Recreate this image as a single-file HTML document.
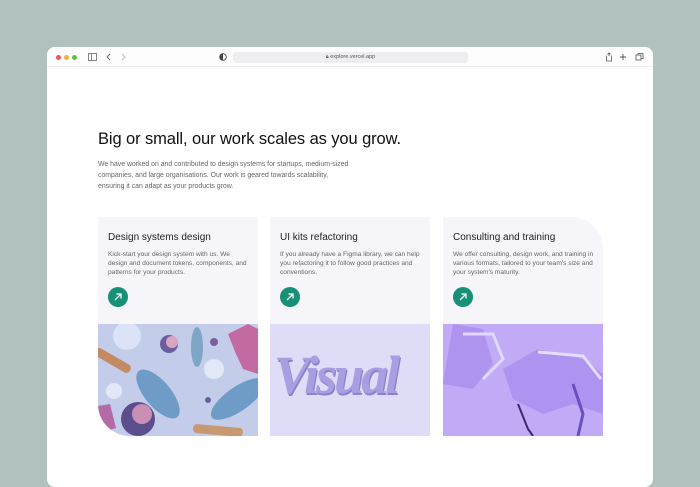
<!DOCTYPE html>
<html><head><meta charset="utf-8"><style>
*{margin:0;padding:0;box-sizing:border-box}
body{width:700px;height:476px;background:#b1c1be;font-family:"Liberation Sans",sans-serif;position:relative;overflow:hidden}
.win{position:absolute;left:47px;top:47px;width:606px;height:440px;background:#fff;border-radius:8px;overflow:hidden}
.bar{height:20px;background:#fdfdfe;border-bottom:1px solid #eeeef0;position:relative}
.dot{position:absolute;top:8px;width:5px;height:5px;border-radius:50%}
.url{position:absolute;left:186px;top:5px;width:235px;height:11px;background:#eeeef0;border-radius:3px;font-size:5.5px;color:#555;text-align:center;line-height:11px}
h1{position:absolute;left:51px;top:83px;font-size:16.5px;font-weight:400;color:#111;letter-spacing:-0.1px}
.intro{position:absolute;left:51px;top:112px;white-space:nowrap;font-size:6.9px;line-height:11px;color:#666}
.card{position:absolute;top:170px;width:160px;height:219px;background:#f6f5fa;overflow:hidden}
.card h2{position:absolute;left:10px;top:15px;font-size:10px;font-weight:400;color:#222}
.card p{position:absolute;left:10px;top:33px;white-space:nowrap;font-size:6.6px;line-height:9.2px;color:#666}
.btn{position:absolute;left:10px;top:70px;width:20px;height:20px;border-radius:50%;background:#179077}
.img{position:absolute;left:0;top:107px;width:100%;height:112px}
</style></head><body>
<div class="win">
 <div class="bar">
  <div class="dot" style="left:9px;background:#ec5a54"></div>
  <div class="dot" style="left:17px;background:#f1b13a"></div>
  <div class="dot" style="left:25px;background:#5dc244"></div>
  <svg style="position:absolute;left:41px;top:6px" width="10" height="8"><rect x="0.5" y="0.5" width="8" height="7" fill="none" stroke="#666" stroke-width="0.8"/><line x1="3.5" y1="0.5" x2="3.5" y2="7.5" stroke="#666" stroke-width="0.8"/></svg>
  <svg style="position:absolute;left:59px;top:6px" width="20" height="8"><path d="M4 1L1 4L4 7" fill="none" stroke="#666" stroke-width="0.9"/><path d="M16 1L19 4L16 7" fill="none" stroke="#bbb" stroke-width="0.9"/></svg>
  <svg style="position:absolute;left:172px;top:6px" width="8" height="8"><circle cx="4" cy="4" r="3.3" fill="none" stroke="#444" stroke-width="0.9"/><path d="M4 0.7A3.3 3.3 0 0 0 4 7.3Z" fill="#444"/></svg>
  <div class="url">🔒︎ explore.vercel.app</div>
  <svg style="position:absolute;left:558px;top:5px" width="44" height="10"><path d="M4 4V1M2.5 2.5L4 1L5.5 2.5M2 4H1.5V9H6.5V4H6" fill="none" stroke="#555" stroke-width="0.8"/><path d="M18 2V8M15 5H21" stroke="#555" stroke-width="0.9"/><rect x="31" y="3" width="5" height="5" fill="none" stroke="#555" stroke-width="0.8"/><path d="M33 3V1.5H38V6.5H36" fill="none" stroke="#555" stroke-width="0.8"/></svg>
 </div>
 <h1>Big or small, our work scales as you grow.</h1>
 <div class="intro">We have worked on and contributed to design systems for startups, medium-sized<br>companies, and large organisations. Our work is geared towards scalability,<br>ensuring it can adapt as your products grow.</div>

 <div class="card" style="left:51px;border-bottom-left-radius:32px">
  <h2>Design systems design</h2>
  <p>Kick-start your design system with us. We<br>design and document tokens, components, and<br>patterns for your products.</p>
  <div class="btn"><svg width="20" height="20"><path d="M7 13L13 7M8.5 7H13V11.5" fill="none" stroke="#fff" stroke-width="1.3"/></svg></div>
  <svg class="img" viewBox="0 0 160 112" preserveAspectRatio="none">
   <rect width="160" height="112" fill="#c3cdea"/>
   <circle cx="29" cy="12" r="14" fill="#dfe6f7" opacity=".9"/>
   <circle cx="71" cy="20" r="9" fill="#6a5da0"/><circle cx="74" cy="18" r="6" fill="#d9a6c0"/>
   <ellipse cx="99" cy="23" rx="6" ry="20" fill="#7fa6c6"/>
   <circle cx="116" cy="18" r="4" fill="#7a5fa0"/>
   <circle cx="116" cy="45" r="10" fill="#e2e8f7"/>
   <path d="M130 10L150 0L160 5V50L145 45L138 30Z" fill="#c36aa3"/>
   <rect x="-5" y="32" width="40" height="9" rx="4" fill="#c38a64" transform="rotate(30 15 36)"/>
   <ellipse cx="60" cy="70" rx="13" ry="30" fill="#6f9cc6" transform="rotate(-40 60 70)"/>
   <ellipse cx="140" cy="75" rx="12" ry="32" fill="#6f9cc6" transform="rotate(55 140 75)"/>
   <circle cx="16" cy="67" r="8" fill="#e2e8f7"/>
   <circle cx="40" cy="95" r="17" fill="#5c4d8c"/><circle cx="44" cy="90" r="10" fill="#c98fb5"/>
   <circle cx="110" cy="76" r="3" fill="#6a5da0"/>
   <rect x="95" y="102" width="50" height="9" rx="4" fill="#c89870" transform="rotate(5 120 106)"/>
   <path d="M0 82L12 80L18 104L0 110Z" fill="#b56aa8"/>
  </svg>
 </div>

 <div class="card" style="left:223px">
  <h2>UI kits refactoring</h2>
  <p>If you already have a Figma library, we can help<br>you refactoring it to follow good practices and<br>conventions.</p>
  <div class="btn"><svg width="20" height="20"><path d="M7 13L13 7M8.5 7H13V11.5" fill="none" stroke="#fff" stroke-width="1.3"/></svg></div>
  <div class="img" style="background:#dedcf6;">
   <div style="position:absolute;left:4px;top:20px;font-family:'Liberation Serif',serif;font-style:italic;font-weight:700;font-size:54px;color:#a99ee2;letter-spacing:-3px;text-shadow:1px 2px 0 #8b80cc">Visual</div>
  </div>
 </div>

 <div class="card" style="left:396px;border-top-right-radius:32px">
  <h2>Consulting and training</h2>
  <p>We offer consulting, design work, and training in<br>various formats, tailored to your team's size and<br>your system's maturity.</p>
  <div class="btn"><svg width="20" height="20"><path d="M7 13L13 7M8.5 7H13V11.5" fill="none" stroke="#fff" stroke-width="1.3"/></svg></div>
  <svg class="img" viewBox="0 0 160 112" preserveAspectRatio="none">
   <rect width="160" height="112" fill="#c1abf6"/>
   <path d="M10 0L40 5L50 40L30 65L0 60Z" fill="#a58aec" opacity=".7"/>
   <path d="M60 45L95 25L140 35L160 50V90L130 80L100 90L70 75Z" fill="#a88ef0" opacity=".8"/>
   <path d="M20 10L50 10L60 35L40 55" fill="none" stroke="#e2d8ff" stroke-width="3"/>
   <path d="M95 28L140 32L158 55" fill="none" stroke="#e6dcff" stroke-width="3"/>
   <path d="M75 80L85 105L90 112" fill="none" stroke="#3d2a6e" stroke-width="2"/>
   <path d="M130 60L140 90L135 112" fill="none" stroke="#6a4fc0" stroke-width="3"/>
  </svg>
 </div>
</div>
</body></html>
